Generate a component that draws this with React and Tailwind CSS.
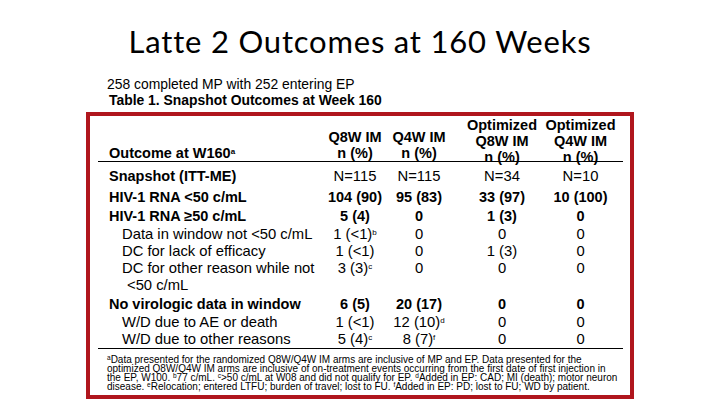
import React from "react";

const Sup = ({ children }) => (
  <span className="text-[8px] align-[4px] leading-none">{children}</span>
);
const FSup = ({ children }) => (
  <span className="text-[6.5px] align-[3px] leading-none">{children}</span>
);

const rows = [
  { label: "Snapshot (ITT-ME)", lb: true, vb: false, h: "h-[25px] pt-[2px]", v: ["N=115", "N=115", "N=34", "N=10"] },
  { label: "HIV-1 RNA <50 c/mL", lb: true, vb: true, h: "h-[20px]", v: ["104 (90)", "95 (83)", "33 (97)", "10 (100)"] },
  { label: "HIV-1 RNA \u226550 c/mL", lb: true, vb: true, h: "h-[18px]", v: ["5 (4)", "0", "1 (3)", "0"] },
  { label: "Data in window not <50 c/mL", ind: 1, h: "h-[17px]", v: [<>1 (&lt;1)<Sup>b</Sup></>, "0", "0", "0"] },
  { label: "DC for lack of efficacy", ind: 1, h: "h-[17px]", v: ["1 (<1)", "0", "1 (3)", "0"] },
  { label: "DC for other reason while not", ind: 1, h: "h-[17px]", v: [<>3 (3)<Sup>c</Sup></>, "0", "0", "0"] },
  { label: "<50 c/mL", ind: 2, h: "h-[18px]", v: ["", "", "", ""] },
  { label: "No virologic data in window", lb: true, vb: true, h: "h-[19px]", v: ["6 (5)", "20 (17)", "0", "0"] },
  { label: "W/D due to AE or death", ind: 1, h: "h-[17px]", v: ["1 (<1)", <>12 (10)<Sup>d</Sup></>, "0", "0"] },
  { label: "W/D due to other reasons", ind: 1, h: "h-[18px]", v: [<>5 (4)<Sup>c</Sup></>, <>8 (7)<Sup>f</Sup></>, "0", "0"] },
];

const colW = ["w-[66px]", "w-[62px]", "w-[104px]", "w-[69px] pr-[16px]"];

function Cell({ w, children, bold }) {
  return (
    <div className={`${w} flex flex-col items-center justify-center whitespace-nowrap ${bold ? "font-bold text-[14.5px]" : "text-[14.8px]"}`}>
      {children}
    </div>
  );
}

export default function App() {
  const header = [
    ["", "Q8W IM", "n (%)"],
    ["", "Q4W IM", "n (%)"],
    ["Optimized", "Q8W IM", "n (%)"],
    ["Optimized", "Q4W IM", "n (%)"],
  ];
  return (
    <div className="w-[720px] h-[405px] bg-white overflow-hidden text-black" style={{ fontFamily: '"Liberation Sans", Arial, sans-serif' }}>
      <h1
        className="text-center text-[31px] leading-[31px] pt-[26px] h-[76px] font-normal tracking-[0.8px]"
        style={{ fontFamily: 'Lato, "Open Sans", sans-serif' }}
      >
        Latte 2 Outcomes at 160 Weeks
      </h1>
      <div className="pl-[107px] text-[13.9px] leading-[17px] h-[16px] whitespace-nowrap">258 completed MP with 252 entering EP</div>
      <div className="pl-[109px] text-[13.9px] leading-[17px] font-bold h-[20px] whitespace-nowrap">Table 1. Snapshot Outcomes at Week 160</div>
      <div className="ml-[86px] w-[548px] h-[287px] border-4 border-[#b0161d] pl-[8px] pr-[7px]">
        <div className="flex border-b-[1.5px] border-black text-[14.5px] leading-[16px] h-[46px] pt-[1px]">
          <div className="w-[224px] pl-[11px] font-bold flex flex-col">
            <div className="h-[16px]" />
            <div className="h-[16px]" />
            <div className="h-[16px] whitespace-nowrap">
              Outcome at W160<Sup>a</Sup>
            </div>
          </div>
          {header.map((h, i) => (
            <div key={i} className={`${colW[i]} flex flex-col items-center justify-start font-bold whitespace-nowrap`}>
              <div className="h-[16px]">{h[0]}</div>
              <div className="h-[16px]">{h[1]}</div>
              <div className="h-[16px]">{h[2]}</div>
            </div>
          ))}
        </div>
        <div className="border-b-[1.5px] border-black leading-[16px]">
          {rows.map((r, i) => (
            <div key={i} className={`flex ${r.h}`}>
              <div
                className={`w-[224px] flex items-center whitespace-nowrap ${r.lb ? "font-bold pl-[11px] text-[14.5px]" : r.ind === 2 ? "pl-[29px] text-[14.8px]" : "pl-[24px] text-[14.8px]"}`}
              >
                {r.label}
              </div>
              {r.v.map((v, j) => (
                <Cell key={j} w={colW[j]} bold={r.vb}>
                  <div>{v}</div>
                </Cell>
              ))}
            </div>
          ))}
        </div>
        <div className="pl-[9px] pt-[6px] text-[10px] leading-[9px] whitespace-nowrap">
          <div className="h-[9px]">
            <FSup>a</FSup>Data presented for the randomized Q8W/Q4W IM arms are inclusive of MP and EP. Data presented for the
          </div>
          <div className="h-[9px]">optimized Q8W/Q4W IM arms are inclusive of on-treatment events occurring from the first date of first injection in</div>
          <div className="h-[9px]">
            the EP, W100. <FSup>b</FSup>77 c/mL. <FSup>c</FSup>&gt;50 c/mL at W08 and did not qualify for EP. <FSup>d</FSup>Added in EP: CAD; MI (death); motor neuron
          </div>
          <div className="h-[9px]">
            disease. <FSup>e</FSup>Relocation; entered LTFU; burden of travel; lost to FU. <FSup>f</FSup>Added in EP: PD; lost to FU; WD by patient.
          </div>
        </div>
      </div>
    </div>
  );
}
